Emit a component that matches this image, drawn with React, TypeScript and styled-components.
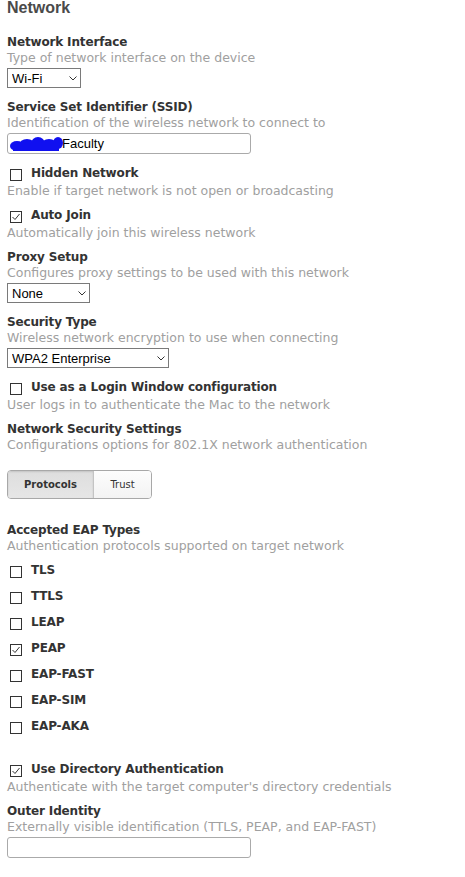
import styled, { createGlobalStyle } from 'styled-components';

const GlobalStyle = createGlobalStyle`
  html, body {
    margin: 0;
    padding: 0;
    background: #fff;
  }
  body {
    font-family: "DejaVu Sans", Verdana, sans-serif;
    color: #333;
  }
`;

const Page = styled.div`
  padding: 0 7px;
`;

const Heading = styled.h2`
  margin: 0 0 18px;
  font-family: "Liberation Sans", Arial, sans-serif;
  font-size: 16px;
  line-height: 16px;
  font-weight: bold;
  color: #4a4a4a;
`;

// flex column so the children's margins don't collapse into the field's
const Field = styled.div`
  display: flex;
  flex-direction: column;
  align-items: flex-start;
  margin-bottom: 8px;
`;

const Label = styled.div`
  font-size: 12px;
  letter-spacing: -0.15px;
  line-height: 16px;
  font-weight: bold;
  color: #333;
  white-space: nowrap;
`;

const Desc = styled.div`
  font-size: 12.5px;
  line-height: 16px;
  color: #a0a0a0;
  white-space: nowrap;
`;

const SelectWrap = styled.div<{ $width: number }>`
  position: relative;
  width: ${p => p.$width}px;
  margin: 2px 0 3px;
`;

const Select = styled.select`
  appearance: none;
  display: block;
  width: 100%;
  height: 20px;
  box-sizing: border-box;
  border: 1px solid #7a7a7a;
  border-radius: 0;
  background: #fff;
  padding: 0 0 0 4px;
  font-family: "Liberation Sans", Arial, sans-serif;
  font-size: 13px;
  color: #000;
  outline: none;
`;

const Chevron = styled.svg`
  position: absolute;
  right: 4px;
  top: 8px;
  pointer-events: none;
`;

const InputWrap = styled.div`
  position: relative;
  width: 244px;
  margin: 2px 0 3px;
`;

const TextInput = styled.input<{ $indent?: number }>`
  display: block;
  width: 100%;
  height: 21px;
  box-sizing: border-box;
  border: 1px solid #aaa;
  border-radius: 3px;
  padding: 0 4px;
  text-indent: ${p => p.$indent ?? 0}px;
  font-family: "Liberation Sans", Arial, sans-serif;
  font-size: 13px;
  color: #000;
  outline: none;
`;

const Scribble = styled.svg`
  position: absolute;
  left: 2px;
  top: 2px;
  pointer-events: none;
`;

const CheckRow = styled.div`
  display: flex;
  align-items: flex-start;
  height: 18px;
`;

const Box = styled.span`
  width: 12px;
  height: 12px;
  box-sizing: border-box;
  border: 1px solid #333;
  background: #fff;
  margin: 4px 9px 0 3px;
  display: flex;
  align-items: center;
  justify-content: center;
  flex-shrink: 0;
`;

const Tabs = styled.div`
  display: flex;
  margin: 17px 0 15px;
  border: 1px solid #a8a8a8;
  border-radius: 4px;
  overflow: hidden;
  height: 29px;
  box-sizing: border-box;
`;

const Tab = styled.div<{ $active?: boolean; $width: number }>`
  width: ${p => p.$width}px;
  display: flex;
  align-items: center;
  justify-content: center;
  font-size: 10px;
  font-weight: ${p => (p.$active ? 'bold' : 'normal')};
  color: #333;
  background: ${p =>
    p.$active
      ? 'linear-gradient(#dedede, #e6e6e6)'
      : 'linear-gradient(#fdfdfd, #f3f3f3)'};
  box-shadow: ${p => (p.$active ? 'inset 0 1px 2px rgba(0,0,0,0.12)' : 'none')};
  & + & {
    border-left: 1px solid #c4c4c4;
  }
`;

const EapList = styled.div`
  margin: 8px 0 17px;
  display: flex;
  flex-direction: column;
  gap: 8px;
`;

const Check = ({ checked, label }: { checked?: boolean; label: string }) => (
  <CheckRow>
    <Box>
      {checked && (
        <svg width="10" height="10" viewBox="0 0 10 10">
          <polyline points="1.5,5 4,7.5 8.5,2" fill="none" stroke="#333" strokeWidth="1" />
        </svg>
      )}
    </Box>
    <Label>{label}</Label>
  </CheckRow>
);

const Dropdown = ({ width, value }: { width: number; value: string }) => (
  <SelectWrap $width={width}>
    <Select defaultValue={value}>
      <option>{value}</option>
    </Select>
    <Chevron width="8" height="5" viewBox="0 0 8 5">
      <polyline points="0.5,0.5 4,4 7.5,0.5" fill="none" stroke="#333" strokeWidth="1" />
    </Chevron>
  </SelectWrap>
);

const eapTypes = [
  { name: 'TLS' },
  { name: 'TTLS' },
  { name: 'LEAP' },
  { name: 'PEAP', checked: true },
  { name: 'EAP-FAST' },
  { name: 'EAP-SIM' },
  { name: 'EAP-AKA' },
];

export default function App() {
  return (
    <Page>
      <GlobalStyle />
      <Heading>Network</Heading>

      <Field>
        <Label>Network Interface</Label>
        <Desc>Type of network interface on the device</Desc>
        <Dropdown width={74} value="Wi-Fi" />
      </Field>

      <Field>
        <Label>Service Set Identifier (SSID)</Label>
        <Desc>Identification of the wireless network to connect to</Desc>
        <InputWrap>
          <TextInput $indent={50} defaultValue="Faculty" />
          <Scribble width="56" height="18" viewBox="0 0 56 18">
            <g fill="#1010f0">
              <ellipse cx="8" cy="11" rx="7" ry="5" />
              <ellipse cx="18" cy="10" rx="8" ry="6" />
              <ellipse cx="29" cy="9" rx="7" ry="7" />
              <ellipse cx="40" cy="10" rx="8" ry="6" />
              <ellipse cx="49" cy="8" rx="5" ry="6" />
              <rect x="4" y="9" width="46" height="7" />
            </g>
          </Scribble>
        </InputWrap>
      </Field>

      <Field>
        <Check label="Hidden Network" />
        <Desc>Enable if target network is not open or broadcasting</Desc>
      </Field>

      <Field>
        <Check checked label="Auto Join" />
        <Desc>Automatically join this wireless network</Desc>
      </Field>

      <Field>
        <Label>Proxy Setup</Label>
        <Desc>Configures proxy settings to be used with this network</Desc>
        <Dropdown width={83} value="None" />
      </Field>

      <Field>
        <Label>Security Type</Label>
        <Desc>Wireless network encryption to use when connecting</Desc>
        <Dropdown width={162} value="WPA2 Enterprise" />
      </Field>

      <Field>
        <Check label="Use as a Login Window configuration" />
        <Desc>User logs in to authenticate the Mac to the network</Desc>
      </Field>

      <Field>
        <Label>Network Security Settings</Label>
        <Desc>Configurations options for 802.1X network authentication</Desc>
        <Tabs>
          <Tab $active $width={85}>Protocols</Tab>
          <Tab $width={57}>Trust</Tab>
        </Tabs>
      </Field>

      <Field>
        <Label>Accepted EAP Types</Label>
        <Desc>Authentication protocols supported on target network</Desc>
        <EapList>
          {eapTypes.map(t => (
            <Check key={t.name} checked={t.checked} label={t.name} />
          ))}
        </EapList>
      </Field>

      <Field>
        <Check checked label="Use Directory Authentication" />
        <Desc>Authenticate with the target computer's directory credentials</Desc>
      </Field>

      <Field>
        <Label>Outer Identity</Label>
        <Desc>Externally visible identification (TTLS, PEAP, and EAP-FAST)</Desc>
        <InputWrap>
          <TextInput />
        </InputWrap>
      </Field>
    </Page>
  );
}
